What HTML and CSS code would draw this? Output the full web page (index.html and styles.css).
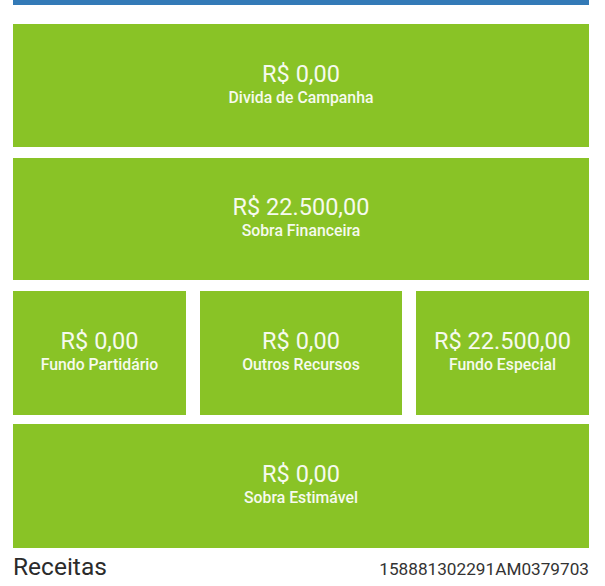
FILE: index.html
```html
<!DOCTYPE html>
<html lang="pt">
<head>
<meta charset="utf-8">
<link rel="stylesheet" href="styles.css">
</head>
<body>
<div class="wrap">
  <div class="topbar"></div>
  <div class="tile tile-a">
    <div class="value">R$ 0,00</div>
    <div class="label">Divida de Campanha</div>
  </div>
  <div class="tile tile-b">
    <div class="value">R$ 22.500,00</div>
    <div class="label">Sobra Financeira</div>
  </div>
  <div class="row3">
    <div class="tile">
      <div class="value">R$ 0,00</div>
      <div class="label">Fundo Partidário</div>
    </div>
    <div class="tile">
      <div class="value">R$ 0,00</div>
      <div class="label">Outros Recursos</div>
    </div>
    <div class="tile">
      <div class="value">R$ 22.500,00</div>
      <div class="label">Fundo Especial</div>
    </div>
  </div>
  <div class="tile tile-d">
    <div class="value">R$ 0,00</div>
    <div class="label">Sobra Estimável</div>
  </div>
  <div class="footer">
    <h2 class="title">Receitas</h2>
    <span class="code">158881302291AM0379703</span>
  </div>
</div>
</body>
</html>
```
FILE: styles.css
```css
html, body {
  margin: 0;
  padding: 0;
  background: #fff;
  font-family: Roboto, "Liberation Sans", sans-serif;
}
.wrap {
  width: 576px;
  margin-left: 13px;
  display: flex;
  flex-direction: column;
  gap: 11px;
}
.topbar {
  height: 5px;
  background: #337ab7;
  margin-bottom: 8px;
}
.tile {
  height: 123px;
  background: #89c326;
  color: #f6faee;
  display: flex;
  flex-direction: column;
  align-items: center;
  justify-content: center;
  padding-bottom: 3px;
  box-sizing: border-box;
}
.tile-b {
  height: 122px;
}
.row3 {
  display: grid;
  grid-template-columns: 173px 1fr 173px;
  gap: 14px;
}
.row3 .tile {
  height: 124px;
}
.tile-d {
  height: 124px;
  margin-top: -2px;
}
.value {
  font-size: 23.5px;
  line-height: 27px;
}
.label {
  font-size: 15.8px;
  font-weight: 500;
  line-height: 20px;
}
.footer {
  display: flex;
  justify-content: space-between;
  align-items: baseline;
  margin-top: -6px;
}
.title {
  margin: 0;
  font-size: 24.5px;
  font-weight: 400;
  color: #2b2b2b;
  line-height: 28px;
}
.code {
  font-size: 17.2px;
  color: #333;
  line-height: 22px;
}
```
